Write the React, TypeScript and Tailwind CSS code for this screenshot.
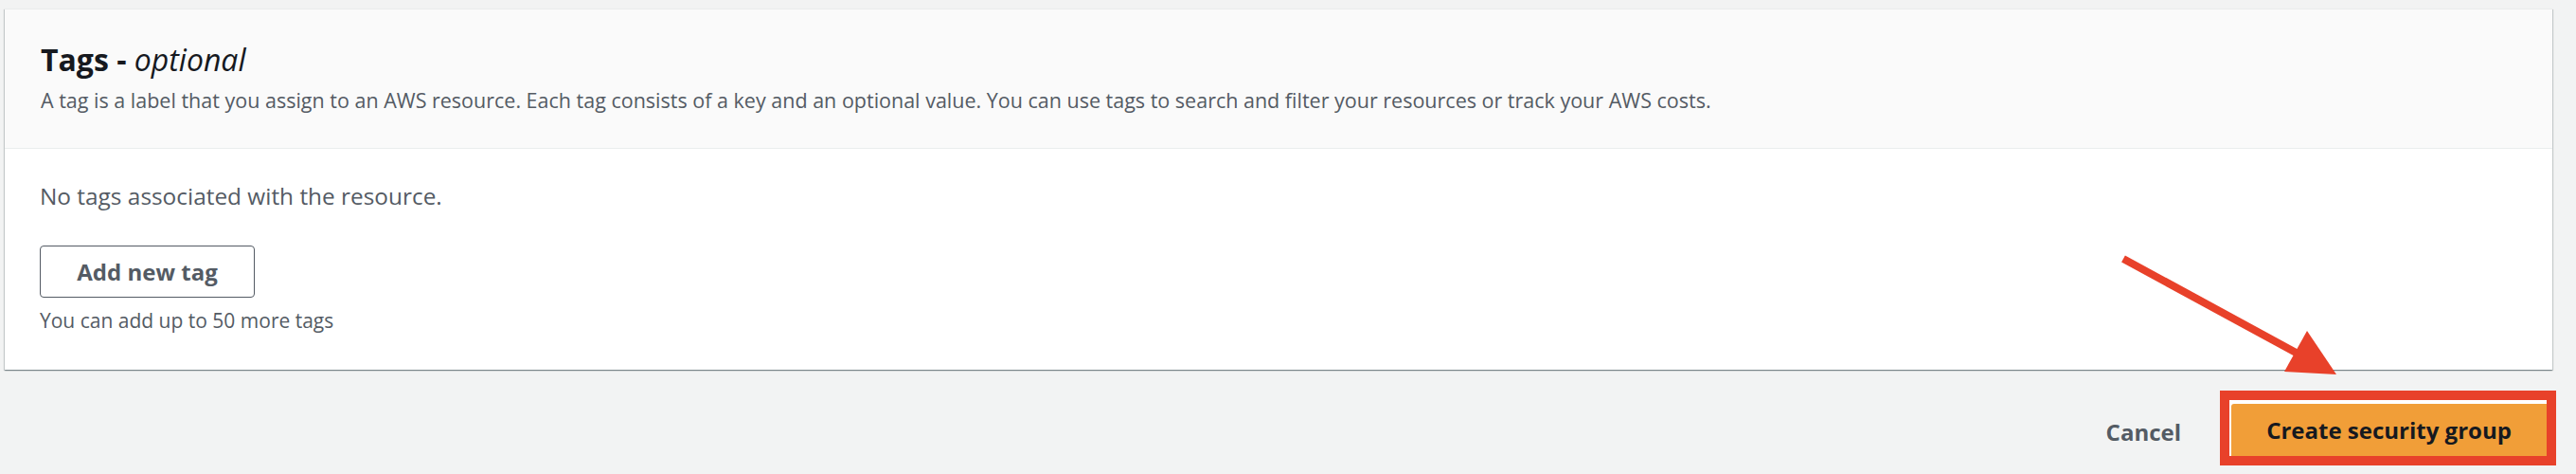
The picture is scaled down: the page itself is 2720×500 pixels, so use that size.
import React from "react";

export default function App() {
  return (
    <div
      className="relative w-[2720px] h-[500px] bg-[#f2f3f3] overflow-hidden"
      style={{ fontFamily: '"Open Sans", "Liberation Sans", Arial, sans-serif' }}
    >
      <div className="pt-[9px] pl-[5px] pr-[25px]">
        <div className="bg-white border-t border-[#eaeded] shadow-[0_1px_1px_0_rgba(0,28,36,0.3),1px_1px_1px_0_rgba(0,28,36,0.15),-1px_1px_1px_0_rgba(0,28,36,0.15)]">
          <div className="h-[147px] bg-[#fafafa] border-b border-[#eaeded] px-[38px] pt-[35px]">
            <h2 className="text-[32px] leading-[36px] font-bold text-[#16191f]">
              Tags - <span className="italic font-normal">optional</span>
            </h2>
            <p className="mt-[11px] text-[21.5px] leading-[28px] text-[#545b64]">
              A tag is a label that you assign to an AWS resource. Each tag consists of a key and an optional value. You can use tags to search and filter your resources or track your AWS costs.
            </p>
          </div>
          <div className="h-[233px] px-[37px] pt-[34px]">
            <p className="text-[24.4px] leading-[32px] text-[#545b64]">No tags associated with the resource.</p>
            <button className="mt-[36px] h-[55px] w-[227px] border-[1.5px] border-[#545b64] rounded-[4px] bg-white text-[24px] font-bold text-[#545b64]">
              Add new tag
            </button>
            <p className="mt-[11px] text-[21px] leading-[26px] text-[#545b64]">You can add up to 50 more tags</p>
          </div>
        </div>
      </div>
      <div className="flex justify-end items-center pr-[21px] pt-[22px]">
        <span className="text-[24px] font-bold text-[#545b64] mr-[41px] mt-[8px]">Cancel</span>
        <div className="border-[10px] border-[#e8412a] bg-white pt-[4px] pl-[2px]">
          <button className="h-[55px] w-[333px] bg-[#f19e38] rounded-tl-[3px] text-[24px] font-bold text-[#16191f]">
            Create security group
          </button>
        </div>
      </div>
      <svg className="absolute left-0 top-0 pointer-events-none" width="2720" height="500">
        <line x1="2242" y1="273" x2="2428" y2="374" stroke="#e8412a" strokeWidth="8" />
        <polygon points="2436,349 2412,392 2467,395" fill="#e8412a" />
      </svg>
    </div>
  );
}
